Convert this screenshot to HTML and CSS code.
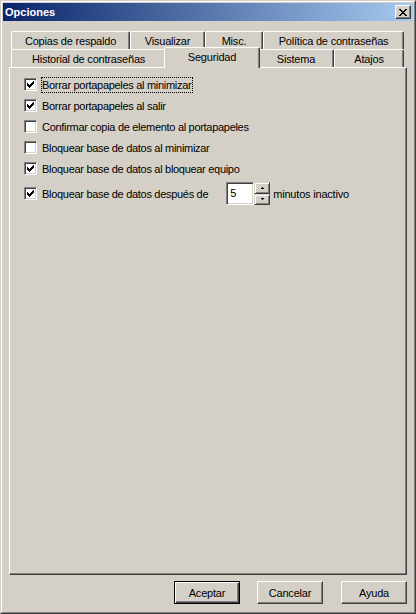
FILE: index.html
```html
<!DOCTYPE html>
<html lang="es">
<head>
<meta charset="utf-8">
<title>Opciones</title>
<link rel="stylesheet" href="styles.css">
</head>
<body>
<div class="window">
  <div class="frame">
    <div class="titlebar">
      <span class="title">Opciones</span>
      <span class="close">
        <svg width="8" height="7" viewBox="0 0 8 7" shape-rendering="crispEdges">
          <path d="M0 0h2v1h-2zM6 0h2v1h-2zM1 1h2v1h-2zM5 1h2v1h-2zM2 2h4v1h-4zM3 3h2v1h-2zM2 4h4v1h-4zM1 5h2v1h-2zM5 5h2v1h-2zM0 6h2v1h-2zM6 6h2v1h-2z" fill="#000"/>
        </svg>
      </span>
    </div>
    <div class="client">
      <div class="tabs">
        <div class="row">
          <div class="tab w-copias">Copias de respaldo</div>
          <div class="tab w-visual">Visualizar</div>
          <div class="tab w-misc">Misc.</div>
          <div class="tab w-politica">Política de contraseñas</div>
        </div>
        <div class="row">
          <div class="tab w-historial">Historial de contraseñas</div>
          <div class="tab sel w-seguridad">Seguridad</div>
          <div class="tab w-sistema">Sistema</div>
          <div class="tab w-atajos">Atajos</div>
        </div>
      </div>
      <div class="panel">
        <div class="opt">
          <span class="cb"><svg class="check" width="9" height="9" viewBox="0 0 9 9" shape-rendering="crispEdges"><path d="M1 3h1v3h-1zM2 4h1v3h-1zM3 5h1v3h-1zM4 4h1v3h-1zM5 3h1v3h-1zM6 2h1v3h-1zM7 1h1v3h-1z" fill="#000"/></svg></span>
          <span class="lbl focus">Borrar portapapeles al minimizar</span>
        </div>
        <div class="opt">
          <span class="cb"><svg class="check" width="9" height="9" viewBox="0 0 9 9" shape-rendering="crispEdges"><path d="M1 3h1v3h-1zM2 4h1v3h-1zM3 5h1v3h-1zM4 4h1v3h-1zM5 3h1v3h-1zM6 2h1v3h-1zM7 1h1v3h-1z" fill="#000"/></svg></span>
          <span class="lbl">Borrar portapapeles al salir</span>
        </div>
        <div class="opt">
          <span class="cb"></span>
          <span class="lbl">Confirmar copia de elemento al portapapeles</span>
        </div>
        <div class="opt">
          <span class="cb"></span>
          <span class="lbl">Bloquear base de datos al minimizar</span>
        </div>
        <div class="opt">
          <span class="cb"><svg class="check" width="9" height="9" viewBox="0 0 9 9" shape-rendering="crispEdges"><path d="M1 3h1v3h-1zM2 4h1v3h-1zM3 5h1v3h-1zM4 4h1v3h-1zM5 3h1v3h-1zM6 2h1v3h-1zM7 1h1v3h-1z" fill="#000"/></svg></span>
          <span class="lbl">Bloquear base de datos al bloquear equipo</span>
        </div>
        <div class="opt spinrow">
          <span class="cb"><svg class="check" width="9" height="9" viewBox="0 0 9 9" shape-rendering="crispEdges"><path d="M1 3h1v3h-1zM2 4h1v3h-1zM3 5h1v3h-1zM4 4h1v3h-1zM5 3h1v3h-1zM6 2h1v3h-1zM7 1h1v3h-1z" fill="#000"/></svg></span>
          <span class="lbl">Bloquear base de datos después de</span>
          <span class="edit">5</span>
          <span class="spin">
            <span class="sb up"><svg width="5" height="3" viewBox="0 0 5 3" shape-rendering="crispEdges"><path d="M2 0h1v1h-1zM1 1h3v1h-3z" fill="#000"/></svg></span>
            <span class="sb down"><svg width="5" height="3" viewBox="0 0 5 3" shape-rendering="crispEdges"><path d="M1 0h3v1h-3zM2 1h1v1h-1z" fill="#000"/></svg></span>
          </span>
          <span class="after">minutos inactivo</span>
        </div>
      </div>
      <div class="buttons">
        <div class="btn default">Aceptar</div>
        <div class="btn b-cancel">Cancelar</div>
        <div class="btn b-help">Ayuda</div>
      </div>
    </div>
  </div>
</div>
</body>
</html>
```
FILE: styles.css
```css
* {
  box-sizing: border-box;
  margin: 0;
  padding: 0;
}

html, body {
  margin: 0;
  background: #d4d0c8;
}

body {
  font-family: "Liberation Sans", Arial, sans-serif;
  font-size: 11px;
  color: #000;
}

.window {
  width: 416px;
  height: 614px;
  border: 1px solid;
  border-color: #d4d0c8 #404040 #404040 #d4d0c8;
  background: #d4d0c8;
}

.frame {
  height: 100%;
  border: 1px solid;
  border-color: #fff #808080 #808080 #fff;
  padding: 1px;
  display: flex;
  flex-direction: column;
}

.titlebar {
  height: 18px;
  flex: none;
  background: linear-gradient(to right, #0a246a, #a6caf0);
  display: flex;
  align-items: center;
  justify-content: space-between;
  padding: 0 2px;
  color: #fff;
  font-weight: bold;
}

.title {
  line-height: 14px;
}

.close {
  width: 16px;
  height: 14px;
  background: #d4d0c8;
  border: 1px solid;
  border-color: #fff #404040 #404040 #fff;
  box-shadow: inset -1px -1px #808080;
  display: flex;
  align-items: center;
  justify-content: center;
  padding-right: 1px;
}

.close svg {
  display: block;
}

.client {
  flex: 1;
  display: flex;
  flex-direction: column;
  padding: 10px 6px 7px;
}

.tabs {
  margin: 0 3px 0 2px;
  flex: none;
}

.row {
  display: flex;
  height: 18px;
}

.tab {
  height: 18px;
  border-top: 1px solid #fff;
  border-left: 1px solid #fff;
  border-right: 1px solid #404040;
  box-shadow: inset -1px 0 #808080;
  border-radius: 2px 2px 0 0;
  text-align: center;
  padding-top: 1px;
  line-height: 16px;
  letter-spacing: -0.2px;
  white-space: nowrap;
  background: #d4d0c8;
}

.tab.sel {
  position: relative;
  z-index: 1;
  height: 21px;
  margin: -2px -2px -1px;
  line-height: 16px;
}

.w-copias { width: 119px; }
.w-visual { width: 75px; }
.w-misc { width: 58px; }
.w-politica { width: 141px; }
.w-historial { width: 155px; }
.w-seguridad { width: 96px; }
.w-sistema { width: 76px; }
.w-atajos { width: 70px; }

.panel {
  flex: 1;
  border: 1px solid;
  border-color: #fff #404040 #404040 #fff;
  box-shadow: inset -1px -1px #808080;
  padding: 10px 14px;
  display: flex;
  flex-direction: column;
  align-items: flex-start;
  gap: 8px;
}

.opt {
  display: flex;
  align-items: center;
  height: 13px;
  white-space: nowrap;
}

.cb {
  width: 13px;
  height: 13px;
  flex: none;
  border: 1px solid;
  border-color: #808080 #fff #fff #808080;
  box-shadow: inset 1px 1px #404040, inset -1px -1px #d4d0c8;
  background: #fff;
}

.check {
  display: block;
  margin: 1px;
}

.lbl {
  margin-left: 4px;
  border: 1px dotted transparent;
  padding-right: 1px;
  line-height: 14px;
  letter-spacing: -0.3px;
}

.lbl.focus {
  border-color: #000;
}

.spinrow {
  height: 23px;
  margin-top: -1px;
}

.edit {
  margin-left: 16px;
  width: 28px;
  height: 23px;
  flex: none;
  border: 1px solid;
  border-color: #808080 #fff #fff #808080;
  box-shadow: inset 1px 1px #404040, inset -1px -1px #d4d0c8;
  background: #fff;
  padding-left: 3px;
  line-height: 20px;
}

.spin {
  display: flex;
  flex-direction: column;
  width: 16px;
  height: 23px;
  flex: none;
}

.sb {
  border: 1px solid;
  border-color: #d4d0c8 #404040 #404040 #d4d0c8;
  box-shadow: inset 1px 1px #fff, inset -1px -1px #808080;
  display: flex;
  align-items: center;
  justify-content: center;
  background: #d4d0c8;
}

.sb svg {
  display: block;
}

.sb.up {
  height: 12px;
}

.sb.down {
  height: 11px;
}

.after {
  margin-left: 3px;
  letter-spacing: -0.2px;
}

.buttons {
  display: flex;
  justify-content: flex-end;
  margin-top: 6px;
  flex: none;
}

.btn {
  width: 66px;
  height: 23px;
  border: 1px solid;
  border-color: #fff #404040 #404040 #fff;
  box-shadow: inset -1px -1px #808080;
  display: flex;
  align-items: center;
  justify-content: center;
  letter-spacing: -0.2px;
}

.btn.default {
  border-color: #000;
  box-shadow: inset 1px 1px #fff, inset -1px -1px #404040, inset -2px -2px #808080;
}

.b-cancel {
  margin-left: 17px;
}

.b-help {
  margin-left: 18px;
}
```
